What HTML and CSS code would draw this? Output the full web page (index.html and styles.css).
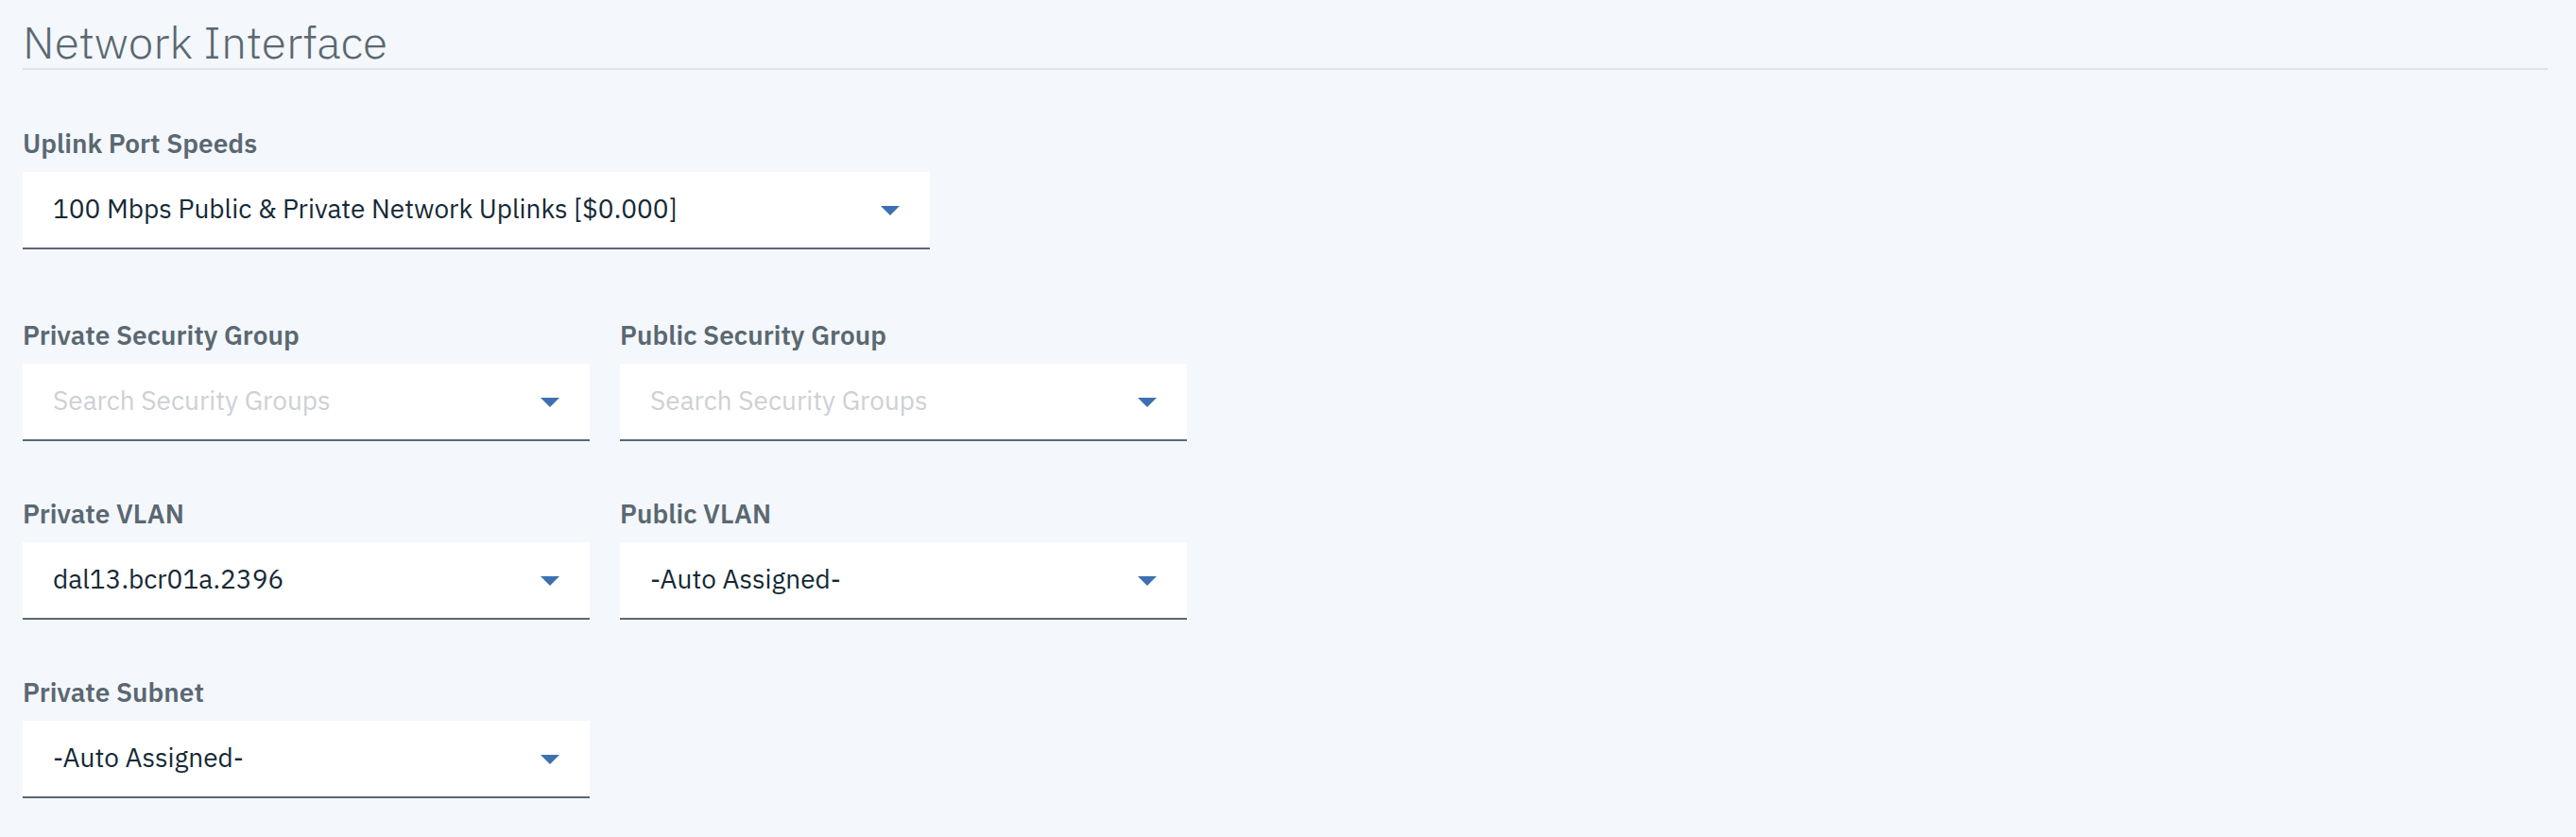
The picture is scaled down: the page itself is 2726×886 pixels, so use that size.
FILE: index.html
```html
<!DOCTYPE html>
<html lang="en">
<head>
<meta charset="utf-8">
<title>Network Interface</title>
<link rel="stylesheet" href="styles.css">
</head>
<body>
<main class="page">
  <h1 class="title">Network Interface</h1>

  <section class="section section-first">
    <div class="field field-wide">
      <div class="label">Uplink Port Speeds</div>
      <div class="select">
        <span class="value">100 Mbps Public &amp; Private Network Uplinks [$0.000]</span>
        <svg class="caret" width="20" height="10" viewBox="0 0 20 10"><polygon points="0,0 20,0 10,10"/></svg>
      </div>
    </div>
  </section>

  <section class="grid">
    <div class="field">
      <div class="label">Private Security Group</div>
      <div class="select">
        <span class="value placeholder">Search Security Groups</span>
        <svg class="caret" width="20" height="10" viewBox="0 0 20 10"><polygon points="0,0 20,0 10,10"/></svg>
      </div>
    </div>
    <div class="field">
      <div class="label">Public Security Group</div>
      <div class="select">
        <span class="value placeholder">Search Security Groups</span>
        <svg class="caret" width="20" height="10" viewBox="0 0 20 10"><polygon points="0,0 20,0 10,10"/></svg>
      </div>
    </div>
    <div class="field">
      <div class="label">Private VLAN</div>
      <div class="select">
        <span class="value">dal13.bcr01a.2396</span>
        <svg class="caret" width="20" height="10" viewBox="0 0 20 10"><polygon points="0,0 20,0 10,10"/></svg>
      </div>
    </div>
    <div class="field">
      <div class="label">Public VLAN</div>
      <div class="select">
        <span class="value">-Auto Assigned-</span>
        <svg class="caret" width="20" height="10" viewBox="0 0 20 10"><polygon points="0,0 20,0 10,10"/></svg>
      </div>
    </div>
    <div class="field">
      <div class="label">Private Subnet</div>
      <div class="select">
        <span class="value">-Auto Assigned-</span>
        <svg class="caret" width="20" height="10" viewBox="0 0 20 10"><polygon points="0,0 20,0 10,10"/></svg>
      </div>
    </div>
  </section>
</main>
</body>
</html>
```
FILE: styles.css
```css
html, body {
  margin: 0;
  padding: 0;
  background: #f4f7fb;
}

body {
  font-family: "IBM Plex Sans", Roboto, "Helvetica Neue", Arial, sans-serif;
  color: #152935;
}

.page {
  padding: 0 30px 0 24px;
}

.title {
  margin: 0;
  padding-top: 17px;
  font-size: 48px;
  line-height: 55px;
  font-weight: 300;
  color: #5a6872;
  border-bottom: 2px solid #dfe3e6;
}

.section-first {
  margin-top: 62px;
  margin-bottom: 75px;
}

.grid {
  display: grid;
  grid-template-columns: 600px 600px;
  column-gap: 32px;
  row-gap: 61px;
}

.field-wide {
  width: 960px;
}

.label {
  font-size: 28px;
  line-height: 32px;
  font-weight: 600;
  color: #5a6872;
  margin-bottom: 14px;
}

.select {
  box-sizing: border-box;
  height: 82px;
  padding: 0 32px 3px 32px;
  background: #ffffff;
  border-bottom: 2px solid #5a6872;
  display: flex;
  align-items: center;
  justify-content: space-between;
}

.value {
  font-size: 28px;
  line-height: 32px;
  color: #152935;
  white-space: nowrap;
}

.placeholder {
  color: #cdd1d4;
}

.caret {
  flex: none;
  margin-top: 4px;
  fill: #3d70b2;
}
```
